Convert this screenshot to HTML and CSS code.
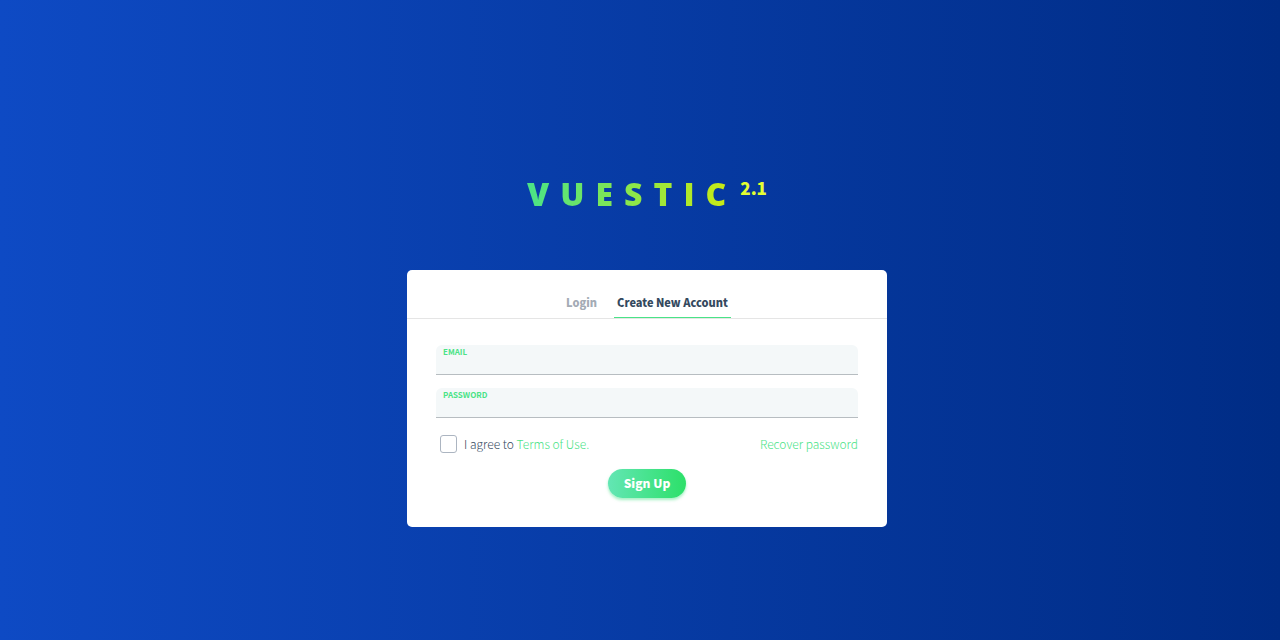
FILE: index.html
```html
<!DOCTYPE html>
<html lang="en">
<head>
<meta charset="utf-8">
<meta name="viewport" content="width=device-width, initial-scale=1">
<title>Vuestic – Create New Account</title>
<link rel="stylesheet" href="styles.css">
</head>
<body>
<main class="auth">
  <header class="brand">
    <div class="wordmark"><span>V</span><span>U</span><span>E</span><span>S</span><span>T</span><span>I</span><span>C</span></div>
    <span class="version">2.1</span>
  </header>
  <section class="card">
    <nav class="tabs">
      <a class="tab" href="#login">Login</a>
      <a class="tab tab-active" href="#signup">Create New Account</a>
    </nav>
    <form class="form">
      <div class="field">
        <label class="field-label" for="email">EMAIL</label>
        <input class="field-input" id="email" type="email">
      </div>
      <div class="field">
        <label class="field-label" for="password">PASSWORD</label>
        <input class="field-input" id="password" type="password">
      </div>
      <div class="options">
        <div class="agree">
          <input class="checkbox" id="agree" type="checkbox">
          <label for="agree">I agree to <a class="link" href="#terms">Terms of Use.</a></label>
        </div>
        <a class="link" href="#recover">Recover password</a>
      </div>
      <button class="submit" type="submit">Sign Up</button>
    </form>
  </section>
</main>
</body>
</html>
```
FILE: styles.css
```css
* {
  box-sizing: border-box;
}

body {
  margin: 0;
  font-family: "Noto Sans CJK SC", "Open Sans", sans-serif;
  font-size: 12px;
  line-height: 18px;
  color: #34495e;
}

.auth {
  min-height: 100vh;
  display: flex;
  flex-direction: column;
  align-items: center;
  justify-content: center;
  padding-left: 14px;
  background: linear-gradient(to right, #0e4ac4, #002c85);
}

.brand {
  display: flex;
  align-items: flex-start;
  gap: 14px;
  padding: 61px 0 56px;
}

.wordmark {
  display: flex;
  gap: 11px;
  font-family: "Open Sans", sans-serif;
  font-size: 32px;
  font-weight: 800;
  line-height: 40px;
  color: transparent;
  background: linear-gradient(to right, #4ae387, #c8ea14);
  -webkit-background-clip: text;
  background-clip: text;
}

.version {
  font-size: 17px;
  font-weight: 900;
  line-height: 28px;
  color: #e4ff32;
}

.card {
  width: 100%;
  max-width: 480px;
  background: #fff;
  border-radius: 5px;
}

.tabs {
  display: flex;
  justify-content: center;
  gap: 14px;
  padding-top: 23px;
  border-bottom: 1px solid #e5e5e5;
}

.tab {
  padding: 0 3px 6px;
  border-bottom: 1px solid transparent;
  font-size: 11px;
  font-weight: 900;
  color: #a4abb5;
  text-decoration: none;
}

.tab-active {
  color: #34495e;
  border-bottom-color: #4ae387;
}

.form {
  display: flex;
  flex-direction: column;
  gap: 13px;
  padding: 26px 29px 29px;
}

.field {
  display: flex;
  flex-direction: column;
  height: 30px;
  background: #f4f8f9;
  border-bottom: 1px solid #b7bdc1;
  border-radius: 6px 6px 0 0;
}

.field-label {
  padding: 2px 7px 0;
  font-size: 8px;
  font-weight: 700;
  line-height: 10px;
  color: #4ae387;
}

.field-input {
  flex: 1;
  min-height: 0;
  width: 100%;
  padding: 0 7px;
  border: 0;
  outline: 0;
  background: transparent;
  font: inherit;
  color: inherit;
}

.options {
  display: flex;
  align-items: center;
  justify-content: space-between;
  padding-top: 4px;
  font-weight: 300;
}

.agree {
  display: flex;
  align-items: center;
  gap: 7px;
  padding-left: 4px;
}

.checkbox {
  appearance: none;
  width: 17px;
  height: 18px;
  margin: 0;
  border: 1px solid #acb5c1;
  border-radius: 3px;
  background: #fff;
}

.checkbox:checked {
  background: #4ae387;
}

.link {
  color: #4ae387;
  text-decoration: none;
}

.submit {
  align-self: center;
  margin-top: 3px;
  padding: 5px 16px 6px;
  border: 0;
  border-radius: 15px;
  background: linear-gradient(to right, #63e6b4, #2ce069);
  box-shadow: 0 2px 3px #4ae38780;
  font: inherit;
  font-weight: 900;
  color: #fff;
}
```
